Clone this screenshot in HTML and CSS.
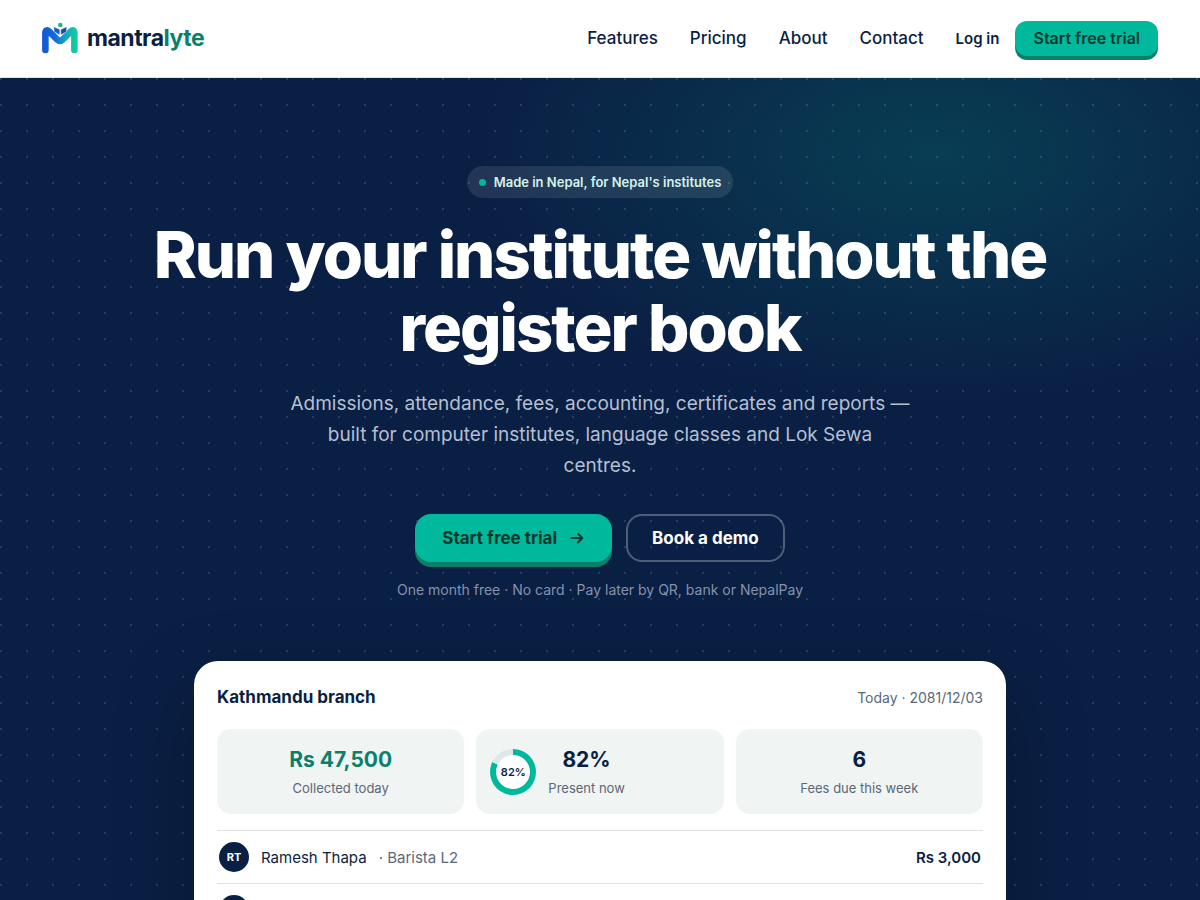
FILE: index.html
```html
<!DOCTYPE html>
<html lang="en">
<head>
  <meta charset="UTF-8" />
  <meta name="viewport" content="width=device-width, initial-scale=1">
  <title>mantralyte</title>
  <link rel="stylesheet" href="styles.css">
</head>
<body>
  <header class="header">
    <a class="brand" href="#">
      <svg class="logo" viewBox="0 0 36 32" aria-hidden="true">
        <defs>
          <linearGradient id="mark" x1="0" y1="0" x2="36" y2="0" gradientUnits="userSpaceOnUse">
            <stop offset="0" stop-color="#1456d9" />
            <stop offset="0.35" stop-color="#1268d8" />
            <stop offset="0.65" stop-color="#12a7c2" />
            <stop offset="1" stop-color="#0fd698" />
          </linearGradient>
        </defs>
        <path d="M3.4 28V11.4Q3.4 6.4 7.6 9.8L15.6 17.8Q18 20 20.4 17.8L28.4 9.8Q32.4 6.4 32.4 11.4V28" fill="none" stroke="url(#mark)" stroke-width="6.6" stroke-linecap="round" stroke-linejoin="round" />
        <path d="M11.8 4.8L17.8 7.4V13L12.2 9.8Z" fill="#1a5cc4" stroke="#fff" stroke-width="0.4" />
        <path d="M24.8 4.8L18.8 7.4V13L24.4 9.8Z" fill="#174f9e" stroke="#fff" stroke-width="0.4" />
        <circle cx="18.3" cy="3" r="2.3" fill="#1cb488" />
      </svg>
      <span class="wordmark">mantra<span>lyte</span></span>
    </a>
    <nav class="nav">
      <a href="#">Features</a>
      <a href="#">Pricing</a>
      <a href="#">About</a>
      <a href="#">Contact</a>
    </nav>
    <a class="login" href="#">Log in</a>
    <button class="btn btn-small">Start free trial</button>
  </header>

  <main class="hero">
    <div class="pill"><span class="dot"></span>Made in Nepal, for Nepal's institutes</div>
    <h1>Run your institute without the register book</h1>
    <p class="lead">Admissions, attendance, fees, accounting, certificates and reports — built for computer institutes, language classes and Lok Sewa<br> centres.</p>
    <div class="actions">
      <button class="btn btn-large">Start free trial
        <svg class="arrow" viewBox="0 0 16 16" aria-hidden="true"><path d="M2.5 8H13M8.8 3.5L13.3 8L8.8 12.5" /></svg>
      </button>
      <button class="btn-ghost">Book a demo</button>
    </div>
    <p class="note">One month free · No card · Pay later by QR, bank or NepalPay</p>

    <section class="card">
      <div class="card-head">
        <h2>Kathmandu branch</h2>
        <span>Today · 2081/12/03</span>
      </div>
      <div class="stats">
        <div class="stat">
          <div class="stat-text">
            <strong class="green">Rs 47,500</strong>
            <small>Collected today</small>
          </div>
        </div>
        <div class="stat stat-ring">
          <div class="ring"><span>82%</span></div>
          <div class="stat-text">
            <strong>82%</strong>
            <small>Present now</small>
          </div>
        </div>
        <div class="stat">
          <div class="stat-text">
            <strong>6</strong>
            <small>Fees due this week</small>
          </div>
        </div>
      </div>
      <ul class="rows">
        <li>
          <span class="avatar">RT</span>
          <span>Ramesh Thapa</span>
          <span class="course">· Barista L2</span>
          <b>Rs 3,000</b>
        </li>
        <li>
          <span class="avatar"></span>
        </li>
      </ul>
    </section>
  </main>
</body>
</html>
```
FILE: styles.css
```css
* { box-sizing: border-box; }

body {
  margin: 0;
  height: 100vh;
  display: flex;
  flex-direction: column;
  overflow: hidden;
  font-family: Inter, sans-serif;
  color: #0a1f44;
  background: #fff;
}

h1, h2, p, ul { margin: 0; padding: 0; }
a { color: inherit; text-decoration: none; }
button { font-family: inherit; cursor: pointer; }

.header {
  flex-shrink: 0;
  display: flex;
  align-items: center;
  height: 78px;
  padding: 0 42px 1px;
  border-bottom: 1px solid #e3e8ee;
  background: #fff;
}

.brand { display: flex; align-items: center; gap: 9px; margin-right: auto; }
.logo { width: 36px; height: 32px; }
.wordmark { font-size: 23px; font-weight: 700; line-height: 28px; letter-spacing: -0.5px; }
.wordmark span { color: #0b7f6a; }

.nav { display: flex; gap: 32px; margin-right: 32px; font-size: 17px; font-weight: 500; }
.login { margin-right: 16px; font-size: 15px; font-weight: 600; }

.btn {
  border: none;
  background: #00b89c;
  color: #06382f;
}

.btn-small {
  height: 35px;
  padding: 0 18px;
  border-radius: 12px;
  font-size: 16px;
  font-weight: 600;
  box-shadow: 0 4px 0 #0b7f6a;
}

.btn-large {
  display: flex;
  align-items: center;
  gap: 12px;
  height: 48px;
  padding: 0 27px;
  border-radius: 16px;
  font-size: 17px;
  font-weight: 700;
  box-shadow: 0 5px 0 #0b7f6a;
}

.arrow {
  width: 16px;
  height: 16px;
  fill: none;
  stroke: currentColor;
  stroke-width: 2;
  stroke-linecap: round;
  stroke-linejoin: round;
}

.btn-ghost {
  height: 48px;
  padding: 0 24px;
  border: 2px solid rgba(255, 255, 255, 0.28);
  border-radius: 16px;
  background: none;
  color: #fff;
  font-size: 17px;
  font-weight: 700;
}

.hero {
  flex: 1;
  min-height: 0;
  display: flex;
  flex-direction: column;
  align-items: center;
  padding: 88px 24px 0;
  overflow: hidden;
  text-align: center;
  background:
    radial-gradient(circle at 1px 1px, rgba(255, 255, 255, 0.13) 1px, transparent 1px) 0 0 / 26px 26px,
    radial-gradient(460px 250px at 78% 75px, rgba(0, 184, 148, 0.2), transparent),
    #0a1f44;
}

.hero > * { flex-shrink: 0; }

.pill {
  display: flex;
  align-items: center;
  gap: 8px;
  height: 32px;
  padding: 0 12px;
  border-radius: 16px;
  background: rgba(255, 255, 255, 0.1);
  color: #d5f2ea;
  font-size: 13px;
  font-weight: 600;
}

.dot { width: 7px; height: 7px; border-radius: 50%; background: #00b89c; }

h1 {
  max-width: 920px;
  margin-top: 20px;
  color: #fff;
  font-size: 65px;
  font-weight: 800;
  line-height: 73px;
  letter-spacing: -2px;
}

.lead {
  max-width: 640px;
  margin-top: 24px;
  color: #b4bfd2;
  font-size: 19px;
  line-height: 31px;
}

.actions { display: flex; gap: 14px; margin-top: 33px; }

.note { margin-top: 18px; color: #8592ab; font-size: 14px; line-height: 20px; }

.card {
  width: 100%;
  max-width: 812px;
  margin-top: 61px;
  padding: 23px;
  border-radius: 24px;
  background: #fff;
  box-shadow: 0 30px 80px rgba(0, 0, 0, 0.25);
}

.card-head { display: flex; justify-content: space-between; align-items: center; height: 26px; }
.card-head h2 { font-size: 17px; font-weight: 700; }
.card-head span { color: #5b6878; font-size: 14px; }

.stats { display: grid; grid-template-columns: repeat(3, 1fr); gap: 12px; margin: 19px 0 16px; }

.stat {
  display: flex;
  align-items: center;
  justify-content: center;
  height: 85px;
  padding: 0 14px;
  border-radius: 14px;
  background: #f0f4f3;
}

.stat-text { padding-top: 2px; }
.stat strong { display: block; font-size: 21px; font-weight: 700; line-height: 30px; }
.stat small { display: block; color: #5b6878; font-size: 13px; line-height: 26px; }
.stat .green { color: #0b7f6a; }

.stat-ring { justify-content: flex-start; gap: 12px; }

.ring {
  display: grid;
  place-items: center;
  width: 46px;
  height: 46px;
  border-radius: 50%;
  background: conic-gradient(#00b89c 82%, #e1e7e6 0);
}

.ring span {
  display: grid;
  place-items: center;
  width: 34px;
  height: 34px;
  border-radius: 50%;
  background: #fff;
  font-size: 11px;
  font-weight: 600;
}

.rows { list-style: none; }

.rows li {
  display: flex;
  align-items: center;
  gap: 12px;
  height: 53px;
  padding: 0 2px;
  border-top: 1px solid #dfe3e8;
  font-size: 15px;
}

.rows b { margin-left: auto; font-weight: 600; }
.course { color: #5b6878; }

.avatar {
  display: grid;
  place-items: center;
  width: 30px;
  height: 30px;
  border-radius: 50%;
  background: #0a1f44;
  color: #fff;
  font-size: 11px;
  font-weight: 700;
}

@media (max-width: 768px) {
  .nav { display: none; }
  .header { padding: 0 20px; }
  h1 { font-size: 40px; line-height: 46px; }
}
```
